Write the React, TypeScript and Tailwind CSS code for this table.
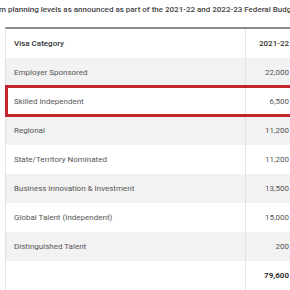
const rows = [
  { name: 'Employer Sponsored', value: '22,000' },
  { name: 'Skilled Independent', value: '6,500' },
  { name: 'Regional', value: '11,200' },
  { name: 'State/Territory Nominated', value: '11,200' },
  { name: 'Business Innovation & Investment', value: '13,500' },
  { name: 'Global Talent (Independent)', value: '15,000' },
  { name: 'Distinguished Talent', value: '200' },
];

export default function App() {
  return (
    <div
      className="relative w-[290px] h-[290px] overflow-hidden bg-white"
      style={{ fontFamily: 'Roboto, "Liberation Sans", sans-serif' }}
    >
      {/* Intro line (clipped both sides, as in the source) */}
      <div className="h-[27px] pt-[4px] whitespace-nowrap text-[8px] font-medium text-[#444] -ml-[1px]">
        m planning levels as announced as part of the 2021-22 and 2022-23 Federal Budget
      </div>

      {/* Table */}
      <div className="ml-[5px] w-[285px] border-t-2 border-[#8a8a8a] border-l border-l-[#e2e2e2]">
        <div className="flex h-[29px] items-center bg-white">
          <div className="w-[239px] pl-[8px] text-[8px] font-medium text-[#333]">Visa Category</div>
          <div className="h-full flex flex-1 items-center justify-end pr-[1px] border-l border-[#e2e2e2] text-[8px] font-medium text-[#333]">
            2021-22
          </div>
        </div>
        {rows.map((r, i) => (
          <div
            key={r.name}
            className={`flex h-[29px] items-center ${i % 2 === 0 ? 'bg-[#f2f2f2]' : 'bg-white'}`}
          >
            <div className="w-[239px] pl-[8px] text-[8px] text-[#555]">{r.name}</div>
            <div className="h-full flex flex-1 items-center justify-end pr-[1px] border-l border-[#e2e2e2] text-[8px] text-[#555]">
              {r.value}
            </div>
          </div>
        ))}
        <div className="flex h-[29px] items-center bg-white">
          <div className="w-[239px]" />
          <div className="h-full flex flex-1 items-center justify-end pr-[1px] border-l border-[#e2e2e2] text-[8px] font-bold text-[#333]">
            79,600
          </div>
        </div>
      </div>

      {/* Highlight box */}
      <div className="absolute left-[5px] top-[85px] w-[300px] h-[32px] border-[3px] border-[#c4262e]" />
    </div>
  );
}
